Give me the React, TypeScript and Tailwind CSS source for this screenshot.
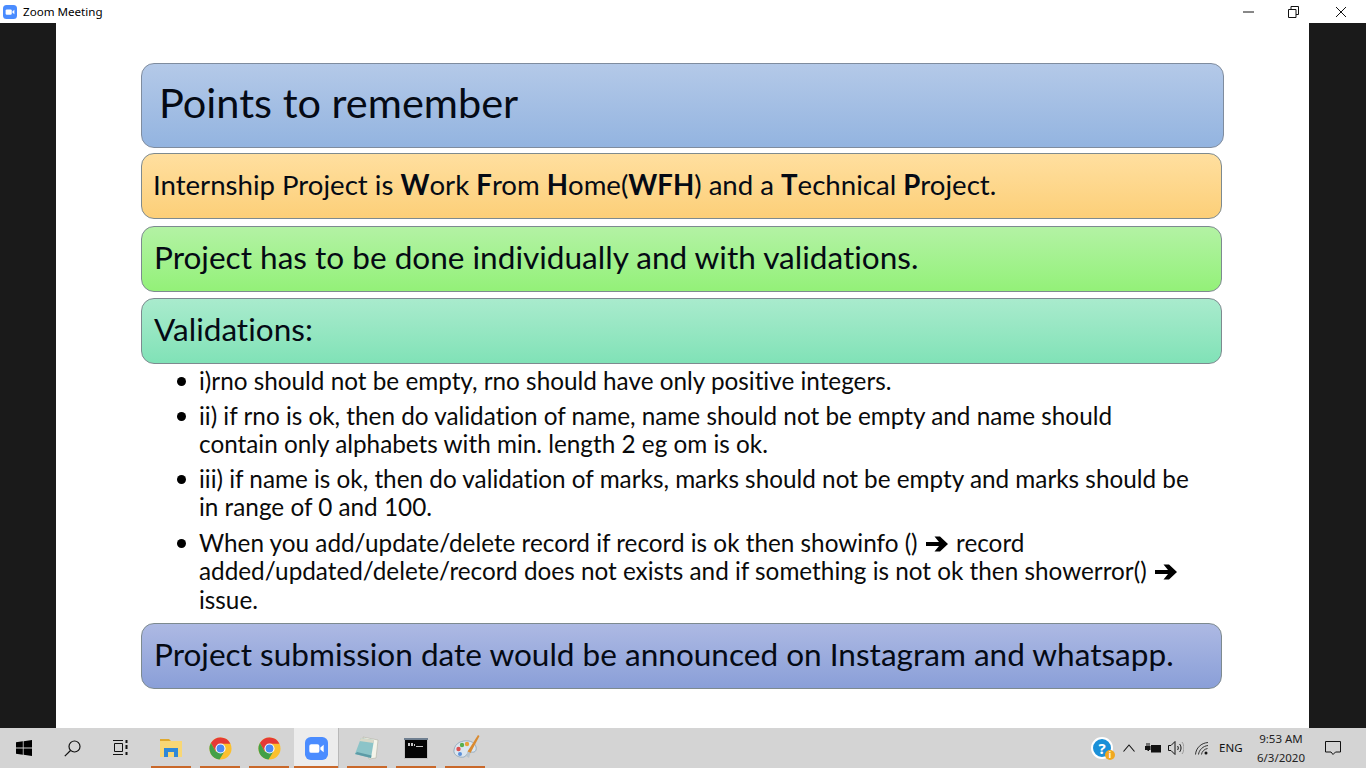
import React from 'react';

const sans = { fontFamily: 'Lato, "Noto Sans", sans-serif' };

const Arrow: React.FC = () => (
    <svg className="inline-block w-[24px] h-[18px] mx-[1px] align-[-1px]" viewBox="0 0 24 18">
        <path d="M1 7h13L9.500 1.500h5.500L23 9l-8 7.500H9.500L14 11H1z" fill="#000" />
    </svg>
);

const Chrome: React.FC = () => (
    <svg className="w-[23px] h-[23px]" viewBox="0 0 24 24">
        <circle cx="12" cy="12" r="11.500" fill="#fbc02d" />
        <path d="M12 .5A11.500 11.500 0 0 0 2 6.300l5 8.700L12 7h10.300A11.500 11.500 0 0 0 12 .5z" fill="#e53935" />
        <path d="M2 6.300A11.500 11.500 0 0 0 11 23.500l5-8.500-9 0z" fill="#43a047" />
        <circle cx="12" cy="12" r="5.300" fill="#fff" />
        <circle cx="12" cy="12" r="4.100" fill="#4a8af4" />
    </svg>
);

const ZoomIcon: React.FC<{ size: number; radius: number }> = ({ size, radius }) => (
    <svg width={size} height={size} viewBox="0 0 24 24">
        <rect width="24" height="24" rx={radius} fill="#4a8cff" />
        <rect x="4.500" y="7.500" width="10.500" height="9" rx="2" fill="#fff" />
        <path d="M16 11l3.500-3v8L16 13z" fill="#fff" />
    </svg>
);

const TaskSlot: React.FC<{ width: string; active?: boolean; children: React.ReactNode }> = ({ width, active, children }) => (
    <div className={`${width} h-full flex items-center justify-center relative ${active ? 'bg-[#ececec]' : ''}`}>
        {children}
        <div className="absolute bottom-0 left-0 right-0 h-[2px] bg-[#c9682a]" />
    </div>
);

const Banner: React.FC<{ className: string; children: React.ReactNode }> = ({ className, children }) => (
    <div className={`w-[1081px] h-[66px] shrink-0 rounded-[13px] border border-[#7d8a8f] flex items-center pb-[3px] text-[#050a14] ${className}`}>
        {children}
    </div>
);

const Bullet: React.FC<{ className: string; children: React.ReactNode }> = ({ className, children }) => (
    <li className={`flex ${className}`}>
        <span className="w-[9px] h-[9px] rounded-full bg-black mt-[10px] ml-[1px] mr-[13px] shrink-0" />
        <span>{children}</span>
    </li>
);

export default function App() {
    return (
        <div className="w-[1366px] h-[768px] overflow-hidden flex flex-col bg-white [font-variant-ligatures:none]" style={sans}>
            {/* title bar */}
            <div className="h-[23px] shrink-0 flex items-center pl-[3px] bg-white">
                <ZoomIcon size={14} radius={6} />
                <span className="ml-[6px] text-[11.600px] text-black" style={{ fontFamily: '"Noto Sans", sans-serif' }}>Zoom Meeting</span>
                <div className="ml-auto flex items-center h-full">
                    <svg className="w-[11px] h-[12px] mr-[34px]" viewBox="0 0 11 12"><path d="M0 6h11" stroke="#111" strokeWidth="1" /></svg>
                    <svg className="w-[11px] h-[12px] mr-[36px]" viewBox="0 0 11 12" fill="none" stroke="#111"><path d="M.5 3.500h7.500v8H.5zM3 3.500V.5h7.500v8H8" /></svg>
                    <svg className="w-[12px] h-[12px] mr-[19px]" viewBox="0 0 12 12" fill="none" stroke="#111"><path d="M1 1l10 10M11 1L1 11" /></svg>
                </div>
            </div>

            {/* meeting area */}
            <div className="flex-1 flex min-h-0">
                <div className="w-[56px] bg-[#1a1a1a]" />
                <div className="flex-1 bg-white pt-[40px] pl-[85px] flex flex-col">
                    <div className="w-[1083px] h-[85px] shrink-0 rounded-[13px] border border-[#7f8c9e] bg-gradient-to-b from-[#b4c9e8] to-[#93b4e0] flex items-center pl-[17px] pb-[6px] text-[41.500px] text-[#050a14]">
                        Points to remember
                    </div>
                    <Banner className="mt-[5px] bg-gradient-to-b from-[#ffdf9f] to-[#fccf78] pl-[11px] text-[27.600px]">
                        <span>Internship Project is <b>W</b>ork <b>F</b>rom <b>H</b>ome(<b>WFH</b>) and a <b>T</b>echnical <b>P</b>roject.</span>
                    </Banner>
                    <Banner className="mt-[7px] bg-gradient-to-b from-[#b3f2a4] to-[#93f178] pl-[12px] text-[31.550px]">
                        Project has to be done individually and with validations.
                    </Banner>
                    <Banner className="mt-[6px] bg-gradient-to-b from-[#a9ebcd] to-[#80e2b7] pl-[12px] text-[31.550px]">
                        Validations:
                    </Banner>
                    <ul className="pl-[35px] text-[24.300px] leading-[28.500px] text-[#0a0a0a] w-[1082px]">
                        <Bullet className="mt-[3px]">i)rno should not be empty, rno should have only positive integers.</Bullet>
                        <Bullet className="mt-[6px]">ii) if rno is ok, then do validation of name, name should not be empty and name should<br />contain only alphabets with min. length 2 eg om is ok.</Bullet>
                        <Bullet className="mt-[6px]">iii) if name is ok, then do validation of marks, marks should not be empty and marks should be<br />in range of 0 and 100.</Bullet>
                        <Bullet className="mt-[7px]">When you add/update/delete record if record is ok then showinfo () <Arrow /> record<br />added/updated/delete/record does not exists and if something is not ok then showerror() <Arrow /><br />issue.</Bullet>
                    </ul>
                    <Banner className="mt-[9px] bg-gradient-to-b from-[#adb9e3] to-[#8a9fd8] pl-[12px] text-[31.550px]">
                        Project submission date would be announced on Instagram and whatsapp.
                    </Banner>
                </div>
                <div className="w-[57px] bg-[#1a1a1a]" />
            </div>

            {/* taskbar */}
            <div className="h-[40px] shrink-0 bg-[#d4d4d4] flex items-center" style={{ fontFamily: '"Noto Sans", sans-serif' }}>
                <div className="w-[48px] flex justify-center">
                    <svg className="w-[16px] h-[16px]" viewBox="0 0 16 16" fill="#000"><path d="M0 2.300l6.800-1v6.300H0zM7.600 1.200L16 0v7.600H7.600zM0 8.400h6.800v6.300L0 13.700zM7.600 8.400H16V16l-8.400-1.200z" /></svg>
                </div>
                <div className="w-[48px] flex justify-center">
                    <svg className="w-[17px] h-[17px]" viewBox="0 0 17 17" fill="none" stroke="#111" strokeWidth="1.200"><circle cx="10.500" cy="6.500" r="5.500" /><path d="M6.500 10.500L.8 16.200" /></svg>
                </div>
                <div className="w-[48px] flex justify-center">
                    <svg className="w-[16px] h-[16px]" viewBox="0 0 16 16" fill="none" stroke="#111"><path d="M1 .5h10M2.500 3.500h8v8h-8zM1 14.500h10" /><path d="M14.500 0v3M14.500 5v4M14.500 12v3" strokeWidth="2" /></svg>
                </div>
                <TaskSlot width="w-[40px] ml-[7px]">
                    <svg className="w-[22px] h-[20px]" viewBox="0 0 22 20">
                        <path d="M0 1h9l2 2h-11z" fill="#e0a92e" />
                        <rect y="3" width="22" height="16" fill="#f8d775" />
                        <path d="M4 19v-9h14v9h-4v-5H8v5z" fill="#2f88d8" />
                    </svg>
                </TaskSlot>
                <div className="w-[9px]" />
                <TaskSlot width="w-[40px]"><Chrome /></TaskSlot>
                <div className="w-[9px]" />
                <TaskSlot width="w-[40px]"><Chrome /></TaskSlot>
                <div className="w-[5px]" />
                <TaskSlot width="w-[44px]" active><ZoomIcon size={23} radius={6} /></TaskSlot>
                <div className="w-[1px] h-full bg-[#b8b8b8]" />
                <div className="w-[8px]" />
                <TaskSlot width="w-[40px]">
                    <svg className="w-[24px] h-[24px]" viewBox="0 0 24 24">
                        <path d="M8 1l15 3-2 18-7 1z" fill="#f4f4ea" stroke="#a8a898" strokeWidth=".5" />
                        <path d="M6 2l13 2-3 18-16-4z" fill="#8cc4c8" />
                        <path d="M6 2l13 2-.5 3L4.500 5z" fill="#d8d8c8" />
                        <path d="M0 18l16 4 .5-2.500L2 16z" fill="#5c9ba6" />
                    </svg>
                </TaskSlot>
                <div className="w-[9px]" />
                <TaskSlot width="w-[40px]">
                    <svg className="w-[24px] h-[21px] mr-[1px]" viewBox="0 0 24 21">
                        <rect width="24" height="21" fill="#c2c2c2" />
                        <rect x="0" y="0" width="24" height="2" fill="#6f7f90" />
                        <rect x="1" y="2" width="22" height="18" fill="#050505" />
                        <path d="M4 5h2v3H4zM7 5h2v3H7zM10 6h1v2h-1zM12 8h7v1h-7z" fill="#c8c8c8" />
                    </svg>
                </TaskSlot>
                <div className="w-[9px]" />
                <TaskSlot width="w-[40px]">
                    <svg className="w-[28px] h-[28px] ml-[3px]" viewBox="0 0 28 28">
                        <path d="M1 16C2 9 9 6 16 7c5 1 8 5 7 9-1 3-4 2-6 2-3 0-3 4-6 5-5 1-11-2-10-7z" fill="#dbe6ef" stroke="#7e9ab0" strokeWidth=".7" />
                        <circle cx="5.500" cy="15" r="2.200" fill="#dd5050" />
                        <circle cx="9" cy="11" r="2.200" fill="#58b04c" />
                        <circle cx="14" cy="10" r="2.200" fill="#e8a23a" />
                        <circle cx="7" cy="20" r="2" fill="#5a90d8" />
                        <path d="M25 1l1.500 1-9 17-3-1.500z" fill="#d98a30" />
                        <path d="M14.500 17.500l3 1.500-1.500 5-3-2z" fill="#b8c4cc" />
                    </svg>
                </TaskSlot>

                {/* tray */}
                <div className="ml-auto h-full flex items-center text-[#111]">
                    <div className="relative w-[22px] h-[22px] mr-[10px]">
                        <div className="w-[22px] h-[22px] rounded-full bg-[#1a90d8] border-[2px] border-white flex items-center justify-center text-white text-[15px] font-bold">?</div>
                        <div className="absolute -right-[2px] -bottom-[1px] w-[10px] h-[10px] rounded-full bg-[#f0a820] text-white text-[8px] leading-[10px] text-center font-bold">i</div>
                    </div>
                    <svg className="w-[12px] h-[8px] mr-[10px]" viewBox="0 0 12 8" fill="none" stroke="#111" strokeWidth="1.100"><path d="M.5 7.500L6 1l5.500 6.500" /></svg>
                    <svg className="w-[16px] h-[11px] mr-[7px]" viewBox="0 0 16 11"><path d="M0 3h1.500V0h1v3h1V0h1v3H5.500v4H4v1H2.500V7H0z" fill="#111" /><rect x="6" y="2" width="10" height="7.500" fill="#111" /></svg>
                    <svg className="w-[16px] h-[14px] mr-[11px]" viewBox="0 0 16 14" fill="none" stroke="#111"><path d="M.5 4.500h2.500l4-4v13l-4-4H.5z" /><path d="M9.500 5c1 1 1 3 0 4M11.500 3c2 2 2 6 0 8" /><path d="M14 1c2.500 3 2.500 9 0 12" stroke="#999" /></svg>
                    <svg className="w-[14px] h-[13px] mr-[10px]" viewBox="0 0 14 13" fill="none" stroke="#333"><path d="M.5 12.500C1 6 6 1 13 .5M3.500 12.500C4 8 8 4 13 3.500M6.500 12.500c.3-3 3-5.500 6-6" /><circle cx="11" cy="11" r="1.500" fill="#111" stroke="none" /></svg>
                    <span className="text-[11.500px] w-[32px]">ENG</span>
                    <div className="w-[60px] text-[11.500px] leading-[19px] text-center text-[#222] flex flex-col">
                        <span>9:53 AM</span>
                        <span>6/3/2020</span>
                    </div>
                    <div className="w-[44px] mr-[11px] flex justify-center">
                        <svg className="w-[16px] h-[16px]" viewBox="0 0 16 16" fill="none" stroke="#111"><path d="M.5 1.500h15v10.500h-5L8 14.500 6 12H.5z" /></svg>
                    </div>
                </div>
            </div>
        </div>
    );
}
